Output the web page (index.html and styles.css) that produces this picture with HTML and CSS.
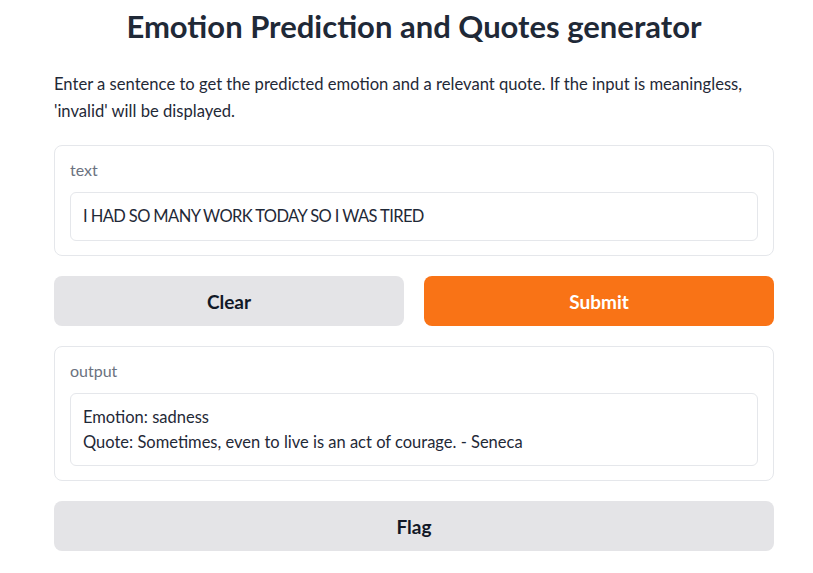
FILE: index.html
```html
<!DOCTYPE html>
<html>
<head>
<meta charset="utf-8">
<link rel="stylesheet" href="styles.css">
</head>
<body>
<div class="app">
  <h1 class="title">Emotion Prediction and Quotes generator</h1>
  <p class="desc">Enter a sentence to get the predicted emotion and a relevant quote. If the input is meaningless, 'invalid' will be displayed.</p>
  <div class="block">
    <div class="label">text</div>
    <div class="field input">I HAD SO MANY WORK TODAY SO I WAS TIRED</div>
  </div>
  <div class="row">
    <button class="btn secondary">Clear</button>
    <button class="btn primary">Submit</button>
  </div>
  <div class="block">
    <div class="label">output</div>
    <div class="field output">Emotion: sadness<br>Quote: Sometimes, even to live is an act of courage. - Seneca</div>
  </div>
  <button class="btn secondary wide">Flag</button>
</div>
</body>
</html>
```
FILE: styles.css
```css
* { box-sizing: border-box; }
html, body { margin: 0; padding: 0; background: #fff; }
body {
  font-family: "Lato", "Open Sans", sans-serif;
  color: #1f2937;
}
.app {
  width: 720px;
  margin-left: 54px;
  display: flex;
  flex-direction: column;
}
.title {
  margin: 7px 0 0;
  font-size: 31px;
  font-weight: 700;
  text-align: center;
  line-height: 38px;
  color: #1f2937;
}
.desc {
  margin: 26px 0 0;
  padding-right: 20px;
  font-size: 16.6px;
  line-height: 27px;
  color: #1f2937;
}
.block {
  margin-top: 20px;
  border: 1px solid #e5e7eb;
  border-radius: 8px;
  padding: 13px 15px 14px;
}
.label {
  font-size: 16px;
  line-height: 22px;
  color: #6b7280;
  margin-bottom: 11px;
}
.field {
  border: 1px solid #e5e7eb;
  border-radius: 6px;
  padding: 11px 12px;
  font-size: 16.5px;
  line-height: 25px;
  color: #1f2937;
}
.input { letter-spacing: -0.6px; }
.output { padding: 11px 12px 10px; }
.row {
  display: flex;
  gap: 20px;
  margin-top: 20px;
}
.btn {
  flex: 1;
  height: 50px;
  border: none;
  border-radius: 8px;
  font-family: inherit;
  font-size: 19px;
  font-weight: 700;
  cursor: pointer;
}
.secondary { background: #e4e4e7; color: #111827; }
.primary { background: #f97316; color: #fff; }
.wide { margin-top: 20px; width: 100%; flex: none; }
```
